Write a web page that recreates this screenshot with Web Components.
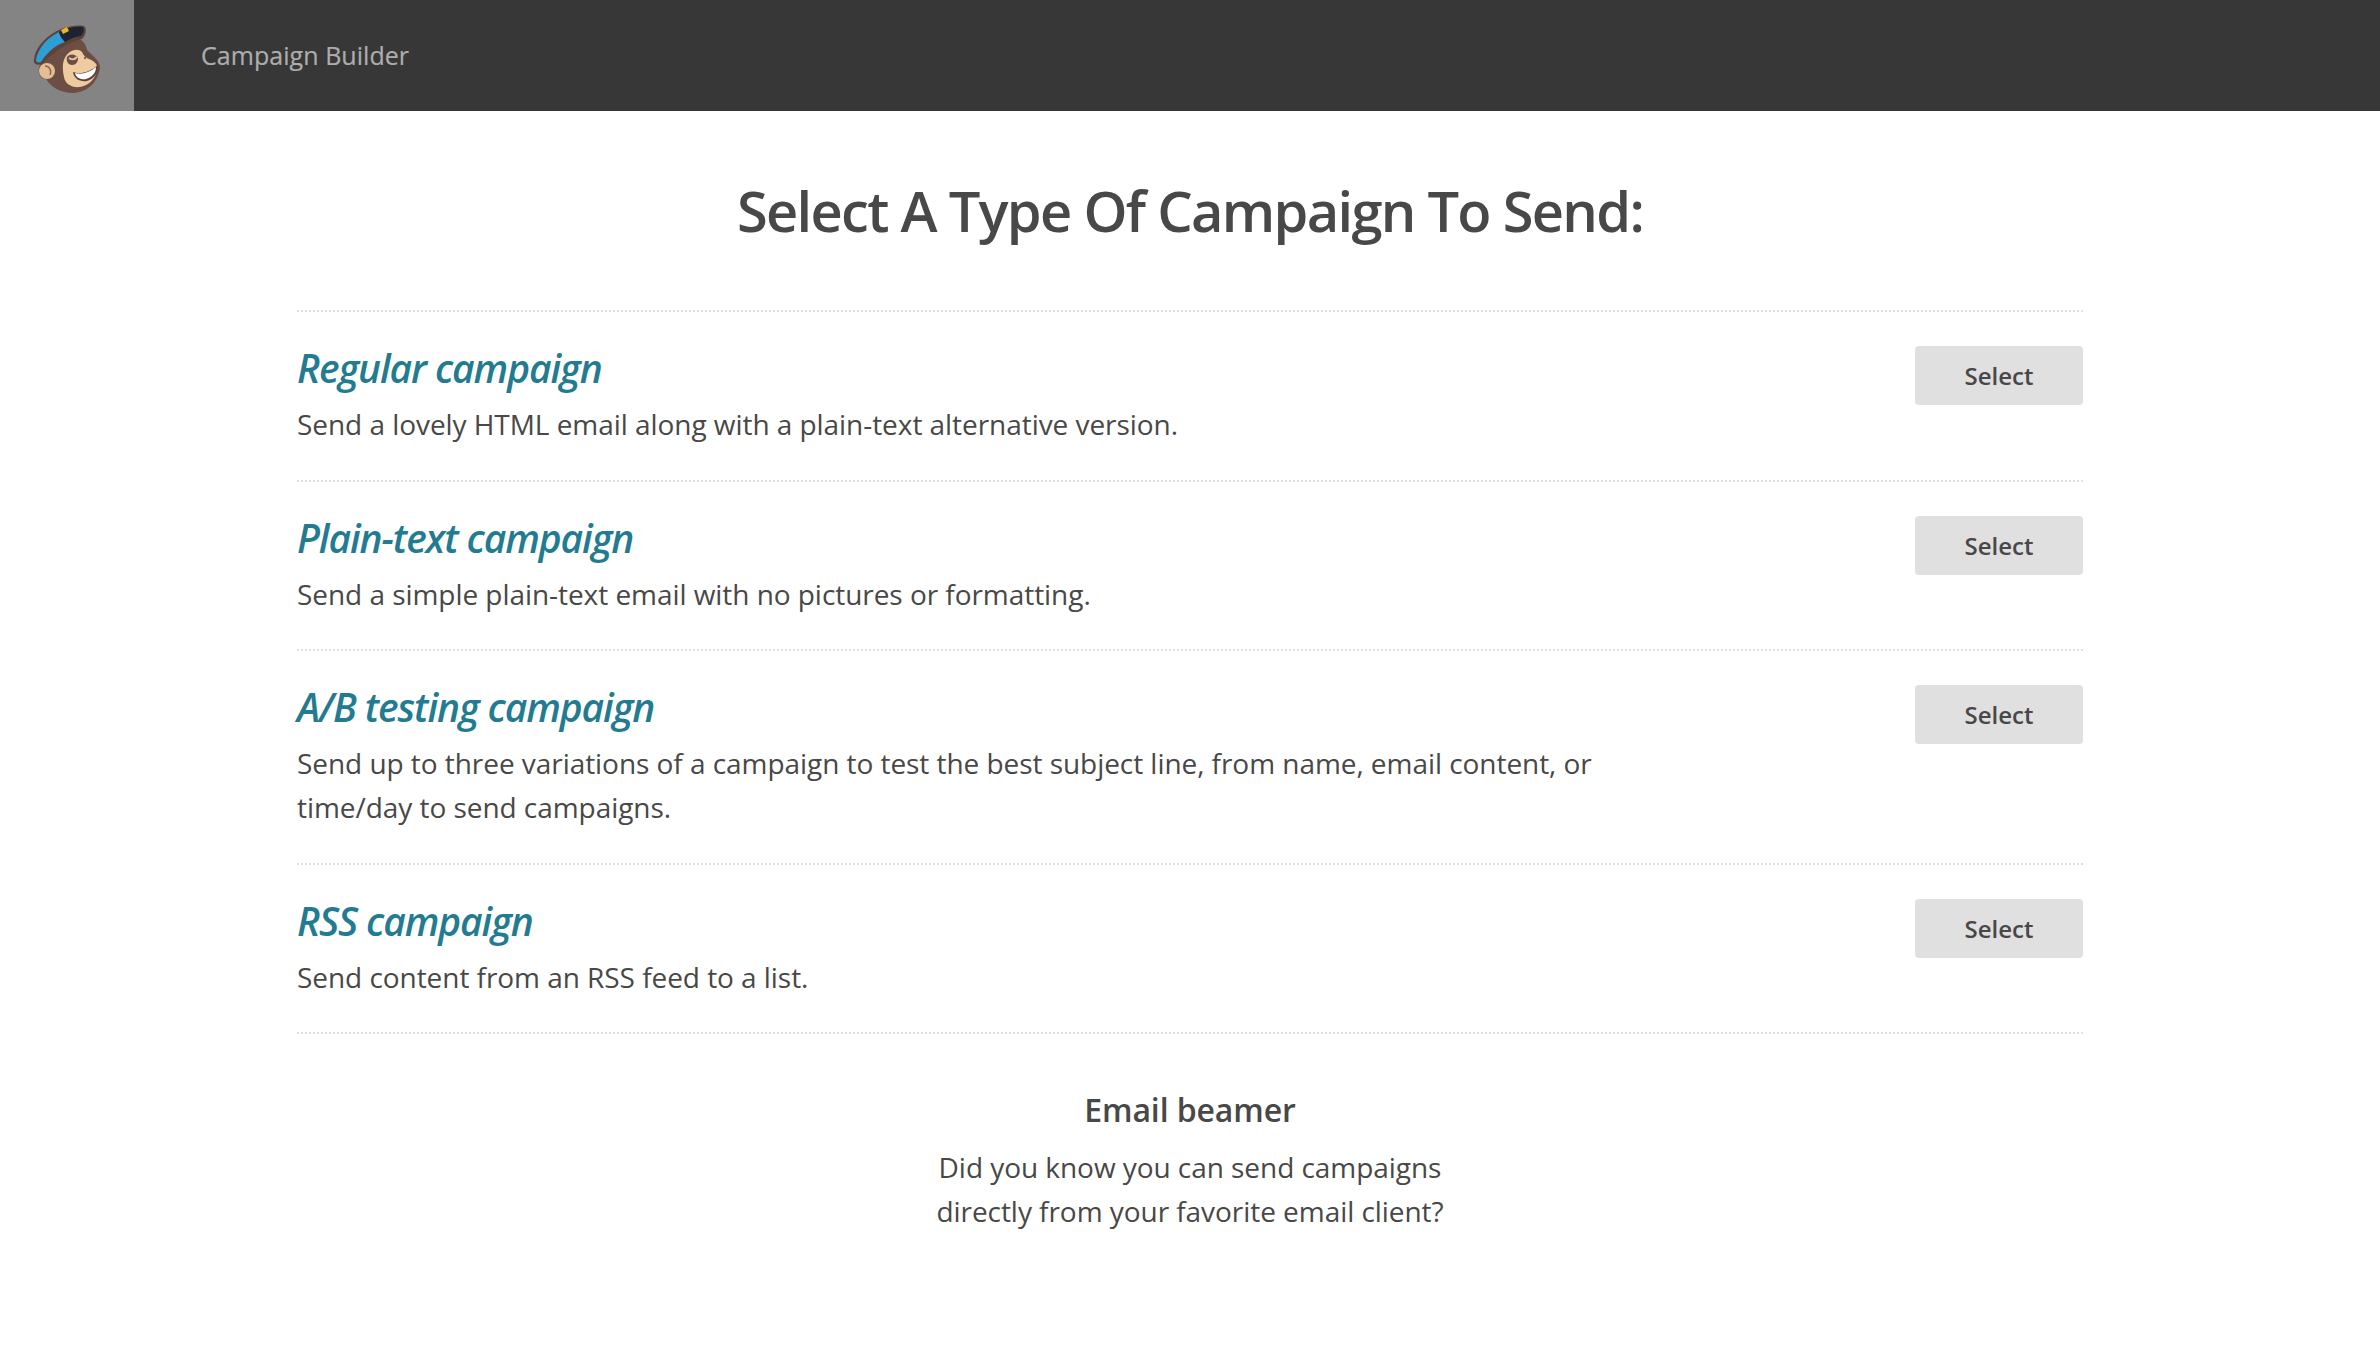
<!DOCTYPE html>
<html><head><meta charset="utf-8"><title>Campaign Builder</title>
<style>
html,body{margin:0;padding:0;background:#fff;font-family:"Open Sans",sans-serif;color:#484848}
</style></head><body>
<app-header>Campaign Builder</app-header>
<campaign-page heading="Select A Type Of Campaign To Send:">
  <campaign-row name="Regular campaign">Send a lovely HTML email along with a plain-text alternative version.</campaign-row>
  <campaign-row name="Plain-text campaign">Send a simple plain-text email with no pictures or formatting.</campaign-row>
  <campaign-row name="A/B testing campaign">Send up to three variations of a campaign to test the best subject line, from name, email content, or time/day to send campaigns.</campaign-row>
  <campaign-row name="RSS campaign">Send content from an RSS feed to a list.</campaign-row>
  <promo-note slot="footer" name="Email beamer">Did you know you can send campaigns<br>directly from your favorite email client?</promo-note>
</campaign-page>
<script>
function el(name,html,setup){customElements.define(name,class extends HTMLElement{
  constructor(){super();this.attachShadow({mode:"open"}).innerHTML=html;}
  connectedCallback(){if(setup)setup(this,this.shadowRoot);}
});}
el("app-header",`<style>
:host{display:flex;height:111px;background:#373737;align-items:center}
.logo{width:134px;height:111px;background:#848484;flex:none;display:block}
.t{margin-left:67px;font-size:25px;font-weight:400;color:#adadad;letter-spacing:.05px;-webkit-text-stroke:.2px #adadad;margin-top:-1px}
</style>
<svg class="logo" viewBox="0 0 134 111" aria-hidden="true">
<path d="M46 58C52 47 62 41 72 38C81 37 86 43 87 50C92 55 100 61 100 67C99 79 90 92 73 93C60 93 50 86 46 79C39 80 37 70 40 65C42 62 44 60 46 58Z" fill="#6c4e44"/>
<path d="M34 60C35 47 47 35 61 29C69 26 82 24 85 27C87 31 85 36 82 39C68 42 52 53 42 64C38 66 33 64 34 60Z" fill="#5e4238"/>
<path d="M36 60C38 48 47 38 59 32C60 36 62 39 65 42C56 45 48 51 41 62C38 63 36 62 36 60Z" fill="#2e9fd6"/>
<path d="M59 32C67 28 76 26 83 27C85 30 83 34 81 36C74 37 70 39 65 42C62 39 60 36 59 32Z" fill="#1c2333"/>
<path d="M61 30L67 27L69 31L63 34Z" fill="#e8b52c"/>
<circle cx="47" cy="71" r="8" fill="#e5bd94"/>
<path d="M45 66C49 66 52 70 50 75" fill="none" stroke="#8a6652" stroke-width="1.4"/>
<path d="M64 60C67 51 77 47 82 52C84 56 86 58 89 59C94 61 98 64 97 69C96 77 91 85 80 87C72 88 65 84 64 77C63 72 62 65 64 60Z" fill="#efcba0"/>
<path d="M67 57C70 53 76 54 78 58C78 62 76 65 72 65C68 65 66 61 67 57Z" fill="#6c4e44"/>
<path d="M69 58C72 60 74 60 77 57" fill="none" stroke="#efcba0" stroke-width="2"/>
<path d="M73 72C80 75 90 72 98 65C99 72 94 79 87 81C80 82 74 79 73 72Z" fill="#5e4238"/>
<path d="M75 73C81 75 89 73 96 67C96 73 92 77 86 79C81 80 76 78 75 73Z" fill="#fff"/>
<circle cx="85" cy="58" r="1.2" fill="#8a6652"/>
</svg>
<div class="t"><slot></slot></div>`);
el("campaign-page",`<style>
:host{display:block;width:1786px;margin:0 auto}
h1{margin:0;font-size:56px;line-height:76px;font-weight:600;text-align:center;letter-spacing:-1.7px;color:#484848;padding:61px 0 62px}
.list{border-top:2px dotted #e0e0e0}
</style>
<h1></h1><div class="list"><slot></slot></div><slot name="footer"></slot>`,(h,s)=>{s.querySelector("h1").textContent=h.getAttribute("heading")});
el("campaign-row",`<style>
:host{display:flex;justify-content:space-between;align-items:flex-start;border-bottom:2px dotted #e0e0e0;padding:31px 0 33.5px;box-sizing:border-box}
.l{width:1330px}
h2{margin:0 0 9px;font-size:39px;line-height:50px;font-weight:600;font-style:italic;color:#237b91;letter-spacing:-1.1px}
p{margin:0;font-size:28px;line-height:44px;color:#484848;letter-spacing:-.05px}
</style>
<div class="l"><h2></h2><p><slot></slot></p></div><action-button>Select</action-button>`,(h,s)=>{s.querySelector("h2").textContent=h.getAttribute("name")});
el("action-button",`<style>
:host{display:flex;width:168px;height:59px;background:#e0e0e0;border-radius:4px;align-items:center;justify-content:center;font-size:24px;font-weight:600;color:#484848;flex:none;margin-top:3px}
</style><slot></slot>`);
el("promo-note",`<style>
:host{display:block;text-align:center;padding-top:52px}
h3{margin:0 0 11px;font-size:32px;line-height:48px;font-weight:600;color:#484848;letter-spacing:-.1px}
p{margin:0;font-size:28px;line-height:44px;letter-spacing:-.05px}
</style><h3></h3><p><slot></slot></p>`,(h,s)=>{s.querySelector("h3").textContent=h.getAttribute("name")});
</script>
</body></html>
